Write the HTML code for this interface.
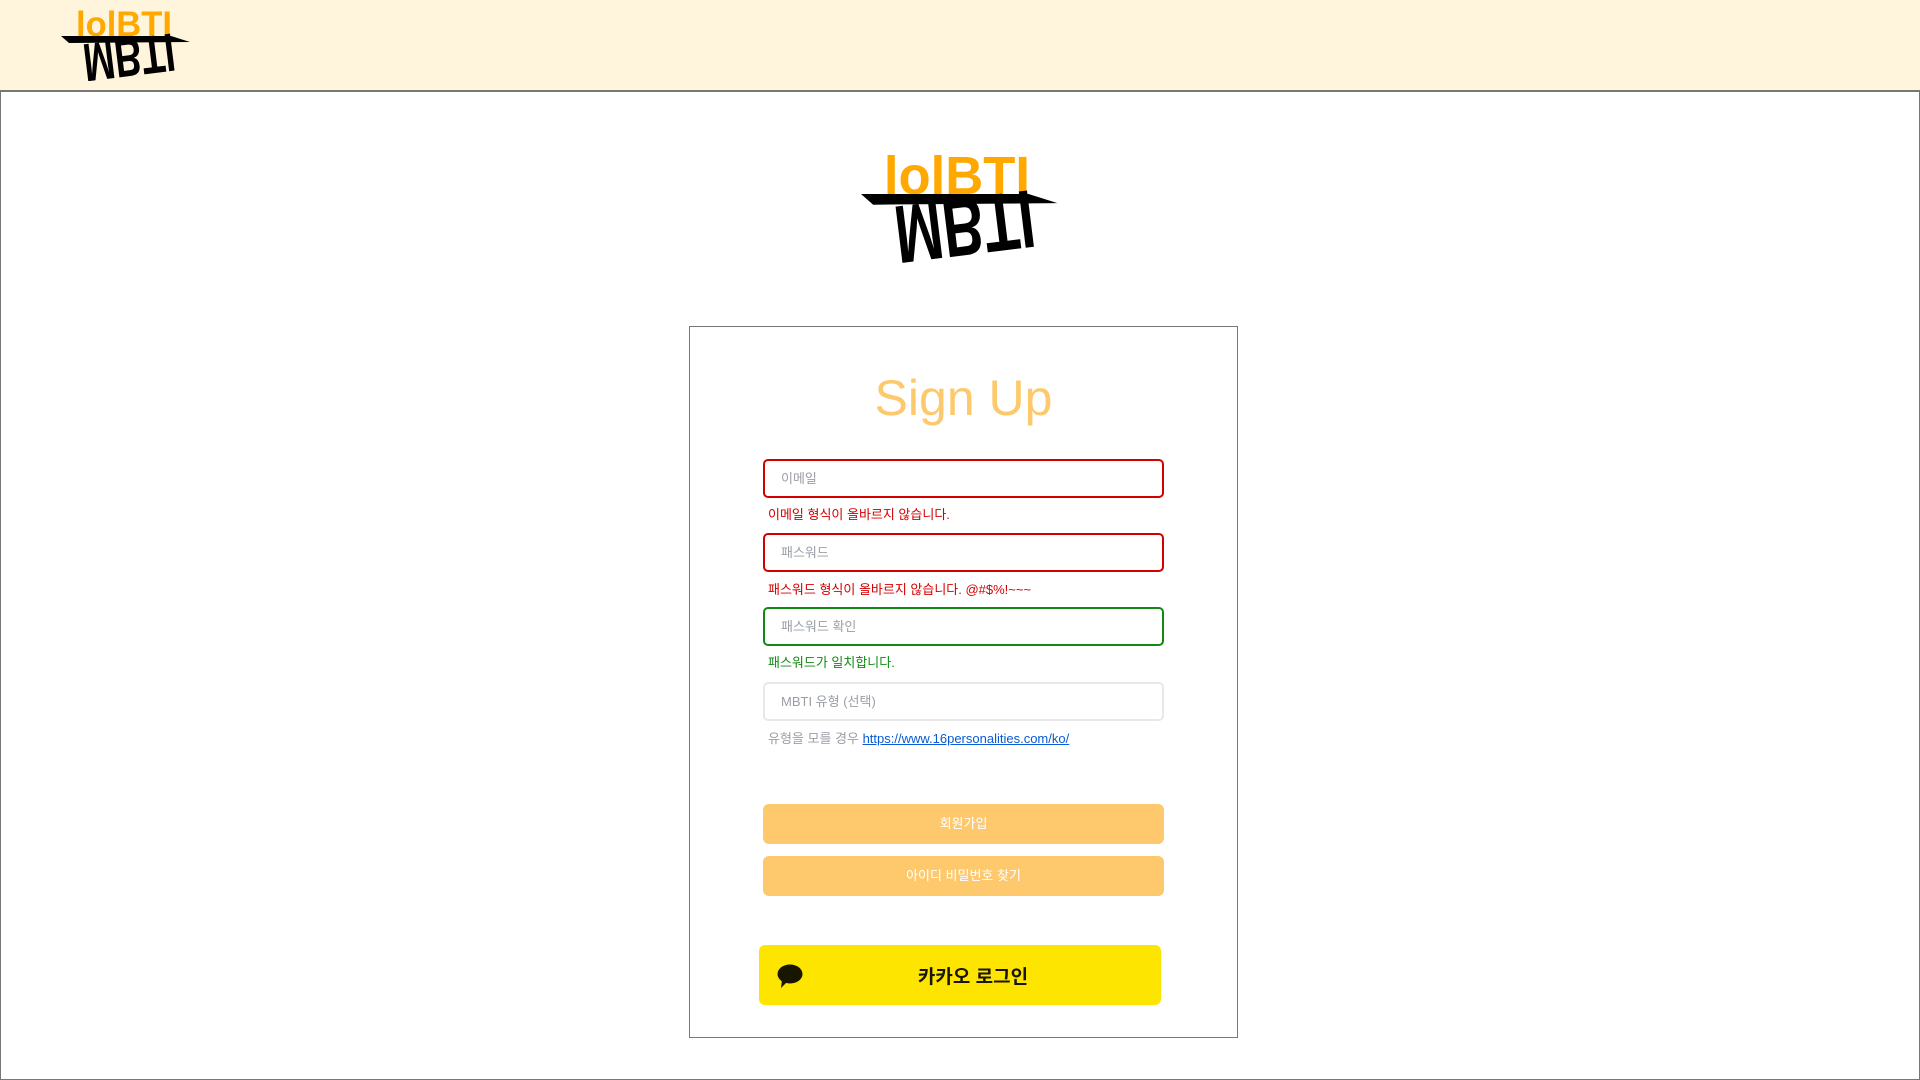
<!DOCTYPE html>
<html><head><meta charset="utf-8"><style>
*{box-sizing:border-box;margin:0;padding:0}
body{width:1920px;height:1080px;background:#fff;font-family:"Liberation Sans","Noto Sans CJK KR",sans-serif;position:relative;overflow:hidden}
.hdr{position:absolute;left:0;top:0;width:1920px;height:92px;background:#fff5dc;border-bottom:2px solid #777}
.main{position:absolute;left:0;top:92px;width:1920px;height:988px;border:1px solid #777;border-top:none}
.card{position:absolute;left:689px;top:326px;width:549px;height:712px;border:1px solid #777}
.abs{position:absolute}
.inp{position:absolute;left:763px;width:401px;height:39px;border-radius:5px;font-size:13px;color:#9a9ea6;padding-left:16px;line-height:35px}
.msg{position:absolute;left:768px;font-size:13px}
.btn{position:absolute;left:763px;width:401px;height:40px;border-radius:6px;background:#fec96d;color:#fff;font-size:13px;text-align:center;line-height:40px}
</style></head><body>
<div class="hdr"></div>
<div class="main"></div>
<svg class="abs" style="left:61px;top:10px" width="130" height="71" viewBox="0 0 130 71">
<g transform="translate(0,26) scale(1,1.3) translate(0,-26)"><text x="15" y="26" font-family="Liberation Sans" font-weight="bold" font-size="27" fill="#ffa800" textLength="96" lengthAdjust="spacingAndGlyphs">lolBTI</text></g>
<polygon points="0,26 110,26 129,32 8,33" fill="#000"/>
<g transform="rotate(-7 66 30) translate(0,58) scale(1,-1)"><text x="20" y="29" font-family="Liberation Sans" font-weight="bold" font-size="54" fill="#000" textLength="92" lengthAdjust="spacingAndGlyphs">MBTI</text></g>
</svg>
<svg class="abs" style="left:861px;top:153px" width="198" height="111" viewBox="0 0 130 71">
<g transform="translate(0,26) scale(1,1.3) translate(0,-26)"><text x="15" y="26" font-family="Liberation Sans" font-weight="bold" font-size="27" fill="#ffa800" textLength="96" lengthAdjust="spacingAndGlyphs">lolBTI</text></g>
<polygon points="0,26 110,26 129,32 8,33" fill="#000"/>
<g transform="rotate(-7 66 30) translate(0,58) scale(1,-1)"><text x="20" y="29" font-family="Liberation Sans" font-weight="bold" font-size="54" fill="#000" textLength="92" lengthAdjust="spacingAndGlyphs">MBTI</text></g>
</svg>
<div class="card"></div>
<div class="abs" style="left:689px;width:549px;top:369px;text-align:center;font-size:50px;color:#fec96d">Sign Up</div>
<div class="inp" style="top:459px;border:2px solid #d40000">이메일</div>
<div class="msg" style="top:504px;color:#d40000">이메일 형식이 올바르지 않습니다.</div>
<div class="inp" style="top:533px;border:2px solid #d40000">패스워드</div>
<div class="msg" style="top:579px;color:#d40000">패스워드 형식이 올바르지 않습니다. @#$%!~~~</div>
<div class="inp" style="top:607px;border:2px solid #118a11">패스워드 확인</div>
<div class="msg" style="top:652px;color:#118a11">패스워드가 일치합니다.</div>
<div class="inp" style="top:682px;border:2px solid #e8e8e8">MBTI 유형 (선택)</div>
<div class="msg" style="top:728px;color:#9a9ea6">유형을 모를 경우 <span style="color:#0a5ad6;text-decoration:underline">https://www.16personalities.com/ko/</span></div>
<div class="btn" style="top:804px">회원가입</div>
<div class="btn" style="top:856px">아이디 비밀번호 찾기</div>
<div class="abs" style="left:759px;top:945px;width:402px;height:60px;background:#fee500;border-radius:6px"></div>
<svg class="abs" style="left:777px;top:963px" width="26" height="26" viewBox="0 0 26 26"><ellipse cx="13" cy="11" rx="12.5" ry="9.5" fill="#191600"/><polygon points="5,17 10,19 4,25" fill="#191600"/></svg>
<div class="abs" style="left:759px;width:402px;top:962px;text-align:center;font-size:19px;font-weight:bold;color:#191600;padding-left:26px">카카오 로그인</div>
</body></html>
